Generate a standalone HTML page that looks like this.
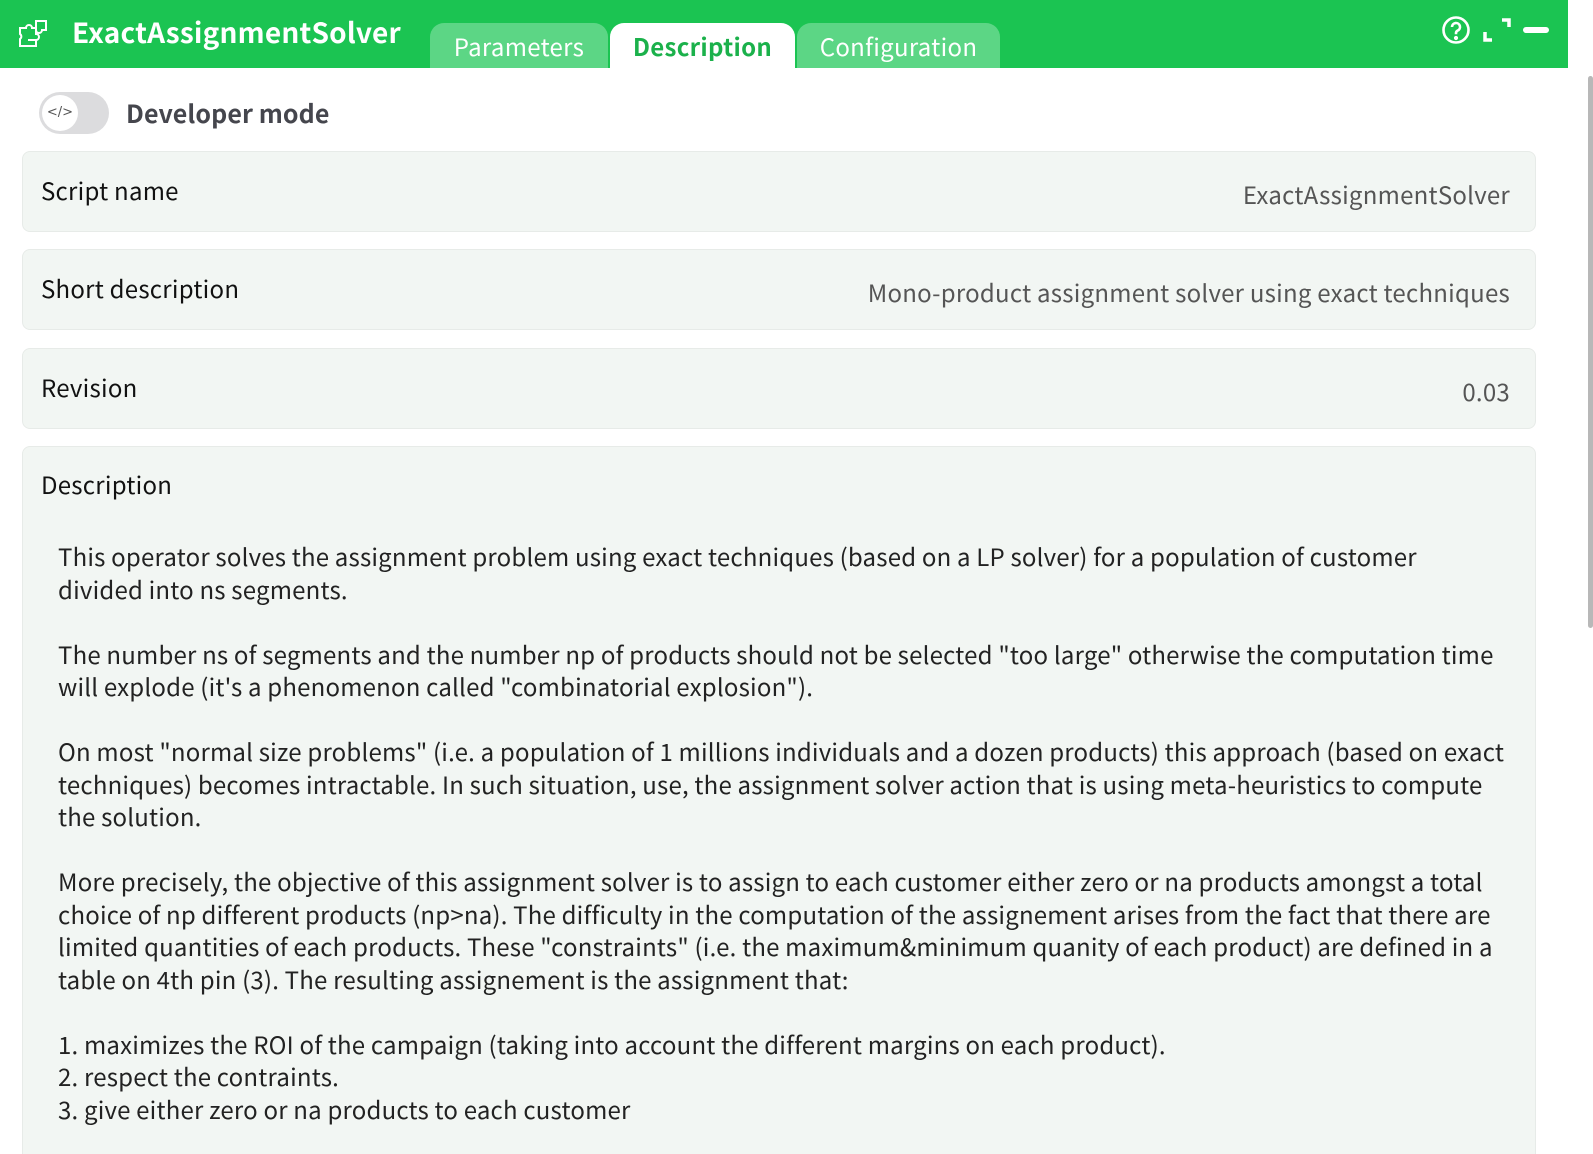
<!DOCTYPE html>
<html><head><meta charset="utf-8"><style>
*{box-sizing:border-box;margin:0;padding:0}
html,body{width:1593px;height:1154px;overflow:hidden}
body{background:#fff;font-family:"Noto Sans CJK SC","Liberation Sans",sans-serif}
#w{position:relative;width:1593px;height:1154px;overflow:hidden}
.hdr{position:absolute;left:0;top:0;width:1568px;height:68px;background:#1bc452}
.title{position:absolute;left:72px;top:12px;color:#fff;font-weight:bold;font-size:28px;line-height:40px;letter-spacing:0.2px}
.tab{position:absolute;top:23px;height:45px;border-radius:14px 14px 0 0;background:#5cd685;color:#fff;font-size:24px;line-height:46px;text-align:center;letter-spacing:0.3px}
.tab.act{background:#fff;color:#1bb14b;font-weight:bold}
.scroll{position:absolute;left:1588px;top:76px;width:5px;height:552px;background:#b8b8b8;border-radius:3px}
.toggle{position:absolute;left:39px;top:92px;width:70px;height:42px;border-radius:21px;background:#dcdcde}
.knob{position:absolute;left:3px;top:3px;width:36px;height:36px;border-radius:50%;background:#fff;font-size:13px;line-height:36px;text-align:center;color:#555;font-family:"DejaVu Sans",sans-serif}
.dev{position:absolute;left:126px;top:95px;font-size:25px;line-height:36px;font-weight:bold;color:#45464d;letter-spacing:0.1px}
.card{position:absolute;left:22px;width:1514px;background:#f2f6f3;border:1px solid #e7ebe8;border-radius:8px}
.lab{position:absolute;left:18px;font-size:24px;line-height:34px;color:#111;letter-spacing:0.25px}
.val{position:absolute;right:25px;font-size:24px;line-height:34px;color:#555;letter-spacing:0.25px}
.desc{position:absolute;left:35px;top:93px;width:1490px;font-size:24px;line-height:32.5px;color:#222;letter-spacing:0.2px;white-space:nowrap}
.desc p{margin-bottom:32.5px}
</style></head><body><div id="w">
<div class="hdr">
<svg style="position:absolute;left:18px;top:18px" width="30" height="32" viewBox="0 0 30 32" fill="none" stroke="#fff" stroke-width="2"><path d="M2 10h6a3 3 0 0 1 6 0h4v6a3 3 0 0 1 0 6v6H2v-7a3 3 0 0 0 0-5z"/><path d="M18 3h10v9h-4a3 3 0 0 1-6 0z"/><path d="M10 22h8"/></svg>
<div class="title">ExactAssignmentSolver</div>
<div class="tab" style="left:430px;width:178px">Parameters</div>
<div class="tab act" style="left:610px;width:185px">Description</div>
<div class="tab" style="left:797px;width:203px">Configuration</div>
<svg style="position:absolute;left:1441px;top:16px" width="30" height="30" viewBox="0 0 30 30" fill="none" stroke="#fff" stroke-width="2.6"><circle cx="15" cy="14" r="12.5"/><path d="M11 11a4 4 0 1 1 5.5 3.7c-1 .5-1.5 1.2-1.5 2.5v1" /><circle cx="15" cy="22" r="0.8" fill="#fff"/></svg>
<svg style="position:absolute;left:1482px;top:18px" width="30" height="26" viewBox="0 0 30 26" fill="none" stroke="#fff" stroke-width="3.5"><path d="M20 2h7v7"/><path d="M3 14v8h7"/></svg>
<div style="position:absolute;left:1523px;top:27px;width:26px;height:6px;background:#fff;border-radius:3px"></div>
</div>
<div class="scroll"></div>
<div class="toggle"><div class="knob">&lt;/&gt;</div></div>
<div class="dev">Developer mode</div>
<div class="card" style="top:151px;height:81px"><div class="lab" style="top:21px">Script name</div><div class="val" style="top:25px">ExactAssignmentSolver</div></div>
<div class="card" style="top:249px;height:81px"><div class="lab" style="top:21px">Short description</div><div class="val" style="top:25px">Mono-product assignment solver using exact techniques</div></div>
<div class="card" style="top:348px;height:81px"><div class="lab" style="top:21px">Revision</div><div class="val" style="top:25px">0.03</div></div>
<div class="card" style="top:446px;height:740px"><div class="lab" style="top:20px">Description</div>
<div class="desc">
<p>This operator solves the assignment problem using exact techniques (based on a LP solver) for a population of customer<br>divided into ns segments.</p>
<p>The number ns of segments and the number np of products should not be selected "too large" otherwise the computation time<br>will explode (it's a phenomenon called "combinatorial explosion").</p>
<p>On most "normal size problems" (i.e. a population of 1 millions individuals and a dozen products) this approach (based on exact<br>techniques) becomes intractable. In such situation, use, the assignment solver action that is using meta-heuristics to compute<br>the solution.</p>
<p>More precisely, the objective of this assignment solver is to assign to each customer either zero or na products amongst a total<br>choice of np different products (np&gt;na). The difficulty in the computation of the assignement arises from the fact that there are<br>limited quantities of each products. These "constraints" (i.e. the maximum&amp;minimum quanity of each product) are defined in a<br>table on 4th pin (3). The resulting assignement is the assignment that:</p>
<div>1. maximizes the ROI of the campaign (taking into account the different margins on each product).<br>2. respect the contraints.<br>3. give either zero or na products to each customer</div>
</div></div>
</div></body></html>
